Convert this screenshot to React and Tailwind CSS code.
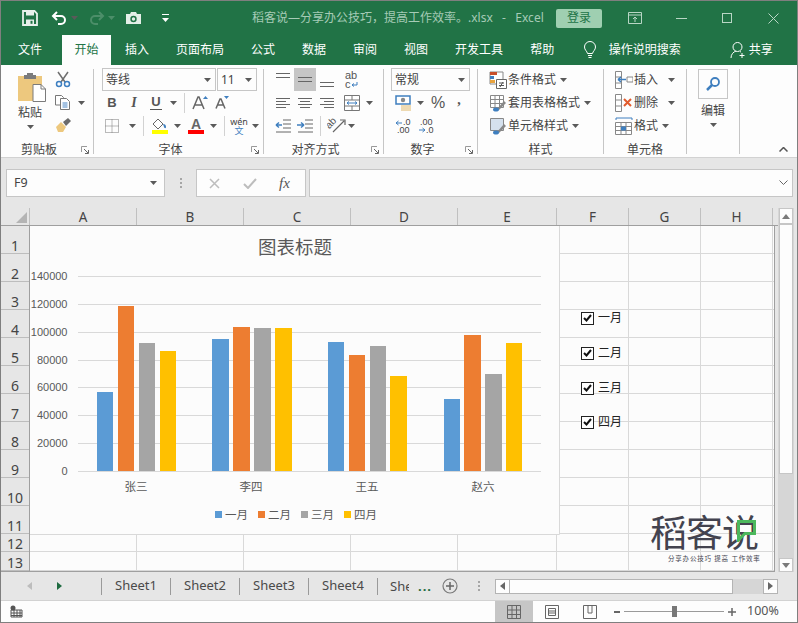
import React from 'react';

const BARS = [
  [[97, 392, 16], [118, 306, 16], [139, 343, 16], [160, 351, 16]],
  [[212, 339, 17], [233, 327, 17], [254, 328, 17], [275, 328, 17]],
  [[328, 342, 16], [349, 355, 16], [370, 346, 16], [390, 376, 17]],
  [[444, 399, 16], [464, 335, 17], [485, 374, 17], [506, 343, 16]],
];
const COLORS = ['#5b9bd5', '#ed7d31', '#a5a5a5', '#ffc000'];
const AXIS = [[276, '140000'], [304, '120000'], [332, '100000'], [360, '80000'], [387, '60000'], [415, '40000'], [443, '20000'], [471, '0']];
const ROW_H = ['h-[28px]', 'h-[28px]', 'h-[28px]', 'h-[28px]', 'h-[28px]', 'h-[28px]', 'h-[28px]', 'h-[28px]', 'h-[28px]', 'h-[28px]', 'h-[28px]', 'h-[18px]', 'h-[19px]'];

const Caret = ({ className = '' }) => (
  <svg width="7" height="4" viewBox="0 0 7 4" className={'shrink-0 ' + className}><path d="M0 0h7L3.5 4z" fill="#5a5a5a" /></svg>
);

const Vsep = ({ className = '' }) => <div className={'w-px h-[20px] bg-[#d2d2d2] shrink-0 ' + className} />;

const Launcher = () => (
  <svg width="8" height="8" viewBox="0 0 8 8" className="absolute right-[4px] bottom-[3px]">
    <path d="M.5 6V.5H6" stroke="#9a9a9a" fill="none" />
    <path d="M3 3l4 4M7.5 4v3.5H4" stroke="#666" fill="none" />
  </svg>
);

const Group = ({ width, label, launcher, children }) => (
  <>
    <div className={'relative flex flex-col shrink-0 ' + width}>
      <div className="flex-1 pt-[3px]">{children}</div>
      <div className={'h-[19px] pt-[2px] text-[12px] leading-[19px] text-center text-[#444] ' + (launcher ? 'pr-[16px]' : '')}>{label}</div>
      {launcher && <Launcher />}
    </div>
    <div className="w-px h-[85px] mt-[4px] bg-[#c6c6c6] shrink-0" />
  </>
);

const Lines = ({ rows }) => (
  <svg width="16" height="14" viewBox="0 0 16 14">
    {rows.map((r, i) => <rect key={i} x={r[0]} y={r[1]} width={r[2]} height="1" fill="#666" />)}
  </svg>
);

const Row = ({ className = '', children }) => <div className={'flex items-center h-[23px] ' + className}>{children}</div>;

const StyleRow = ({ icon, label }) => (
  <div className="flex items-center h-[23px] pl-[11px] text-[12px] text-[#444]">
    <span className="w-[18px] flex shrink-0">{icon}</span>
    <span className="ml-px pt-px">{label}</span>
    <Caret className="ml-[4px]" />
  </div>
);

const CellRow = ({ icon, label, caret }) => (
  <div className="flex items-center h-[23px] pl-[11px] text-[12px] text-[#444]">
    <span className="w-[19px] flex shrink-0">{icon}</span>
    <span className="pt-px">{label}</span>
    <Caret className={caret} />
  </div>
);

const TableIcon = ({ children }) => (
  <svg width="18" height="18" viewBox="0 0 18 18">
    <path d="M1.5 1.5h13v12h-13zM1.5 5.5h13M1.5 9.5h13M6 1.5v12M10.5 1.5v12" stroke="#888" fill="#fff" />
    {children}
  </svg>
);

const Tab = ({ label, active, className = '' }) => (
  <div className={'h-[30px] flex items-center justify-center px-[13.5px] shrink-0 whitespace-nowrap ' + (active ? 'bg-[#fdfdfd] text-[#217346] ' : 'text-white ') + className}>{label}</div>
);

const SheetTab = ({ label }) => (
  <div className="w-[69px] h-[17px] border-l border-[#9a9a9a] flex items-center justify-center text-[13px] text-[#4a4a4a] shrink-0">{label}</div>
);

const CheckItem = ({ top, label }) => (
  <div className={'absolute left-[580px] flex items-center gap-[4px] text-[12px] leading-[14px] text-[#222] ' + top}>
    <div className="w-[13px] h-[13px] border border-[#222] bg-white flex items-center justify-center">
      <svg width="9" height="8" viewBox="0 0 9 8"><path d="M1 4l2.5 2.5L8 1" stroke="#111" strokeWidth="2" fill="none" /></svg>
    </div>
    <span>{label}</span>
  </div>
);

const Chart = () => (
  <svg viewBox="30 226 530 309" width="530" height="309" className="absolute left-[29px] top-0 bg-[#fcfcfc] font-['Liberation_Sans','Noto_Sans_CJK_SC',sans-serif]">
    <path d="M559.5 226v308.5H30" stroke="#d9d9d9" fill="none" />
    <text x="295" y="254" textAnchor="middle" fontSize="18.5" fill="#595959" fontFamily="'Noto Sans CJK SC'">图表标题</text>
    {AXIS.map(([y, t]) => (
      <g key={t}>
        <rect x="78" y={y} width="463" height="1" fill="#d9d9d9" />
        <text x="67.5" y={y + 3.5} textAnchor="end" fontSize="11" fill="#595959">{t}</text>
      </g>
    ))}
    {BARS.map((g, i) => g.map(([x, y, w], j) => <rect key={i + '-' + j} x={x} y={y} width={w} height={471 - y} fill={COLORS[j]} />))}
    {[['张三', 136], ['李四', 251], ['王五', 367], ['赵六', 483]].map(([t, x]) => (
      <text key={t} x={x} y="491" textAnchor="middle" fontSize="11.5" fill="#595959" fontFamily="'Noto Sans CJK SC'">{t}</text>
    ))}
    {[['一月', 215], ['二月', 258], ['三月', 301], ['四月', 344]].map(([t, x], i) => (
      <g key={t}>
        <rect x={x} y="511" width="7" height="7" fill={COLORS[i]} />
        <text x={x + 10} y="519" fontSize="11.5" fill="#595959" fontFamily="'Noto Sans CJK SC'">{t}</text>
      </g>
    ))}
  </svg>
);

export default function App() {
  const colHead = [['A', 'w-[107px]'], ['B', 'w-[107px]'], ['C', 'w-[107px]'], ['D', 'w-[107px]'], ['E', 'w-[99px]'], ['F', 'w-[72px]'], ['G', 'w-[72px]'], ['H', 'w-[72px]']];
  const cols = ['w-[107px]', 'w-[107px]', 'w-[107px]', 'w-[107px]', 'w-[99px]', 'w-[72px]', 'w-[72px]', 'w-[72px]', 'w-[3px]'];
  return (
    <div className="w-[798px] h-[623px] overflow-hidden border border-[#7f7f7f] bg-[#e6e6e6] flex flex-col font-['Noto_Sans','Noto_Sans_CJK_SC',sans-serif]">
      {/* title bar */}
      <div className="h-[34px] bg-[#217346] flex items-center pl-[21px] shrink-0">
        <svg width="16" height="16" viewBox="0 0 16 16">
          <path d="M1 1h11.5L15 3.5V15H1z" stroke="#e8f0eb" strokeWidth="1.8" fill="none" />
          <path d="M4 1h8v4.5H4zM4 9.5h8V15H4z" fill="#e8f0eb" />
          <rect x="8.5" y="10.8" width="2" height="3" fill="#217346" />
        </svg>
        <svg width="17" height="16" viewBox="0 0 17 16" className="ml-[13px]">
          <path d="M6 2L2 6l4 4M2.5 6H10a4 4 0 0 1 0 8H7" stroke="#fff" strokeWidth="2" fill="none" />
        </svg>
        <Caret className="ml-[3px]" />
        <svg width="17" height="16" viewBox="0 0 17 16" className="ml-[10px]">
          <path d="M11 2l4 4-4 4M14.5 6H7a4 4 0 0 0 0 8h3" stroke="#4c8e69" strokeWidth="2" fill="none" />
        </svg>
        <svg width="7" height="4" viewBox="0 0 7 4" className="ml-[3px]"><path d="M0 0h7L3.5 4z" fill="#4c8e69" /></svg>
        <svg width="17" height="14" viewBox="0 0 17 14" className="ml-[10px]">
          <path d="M1 3h4l1-2h5l1 2h4v10H1z" fill="#e4efe8" />
          <circle cx="8.5" cy="8" r="3.2" fill="#217346" />
          <circle cx="8.5" cy="8" r="1.7" fill="#e4efe8" />
        </svg>
        <svg width="7" height="8" viewBox="0 0 7 8" className="ml-[20px]">
          <path d="M0 0h7v1H0z" fill="#fff" /><path d="M0 4h7L3.5 8z" fill="#fff" />
        </svg>
        <div className="ml-[83px] w-[296px] text-[12px] text-[#a6cbb6] whitespace-nowrap [text-spacing-trim:space-all] [font-feature-settings:'palt'_0]">稻客说—分享办公技巧，提高工作效率。.xlsx&nbsp;&nbsp;&nbsp;-&nbsp;&nbsp;&nbsp;Excel</div>
        <div className="ml-[8px] w-[46px] h-[19px] rounded-[2px] bg-[#9fcfb1] text-[#217346] text-[12px] flex items-center justify-center">登录</div>
        <svg width="14" height="12" viewBox="0 0 14 12" className="ml-[26px]">
          <path d="M.5.5h13v11H.5zM.5 3h13M7 10V5M5 7l2-2 2 2" stroke="#b9d6c5" fill="none" />
        </svg>
        <div className="ml-[34px] w-[11px] h-px bg-[#b9d6c5]" />
        <div className="ml-[35px] w-[10px] h-[10px] border border-[#b9d6c5]" />
        <svg width="11" height="11" viewBox="0 0 11 11" className="ml-[36px]"><path d="M.5.5l10 10M10.5.5l-10 10" stroke="#b9d6c5" /></svg>
      </div>
      {/* tabs */}
      <div className="h-[30px] bg-[#217346] flex items-center pl-[3.5px] text-[12px] shrink-0">
        <Tab label="文件" />
        <Tab label="开始" active className="ml-[6.5px] w-[49px] px-0" />
        <Tab label="插入" className="ml-[0.5px]" />
        <Tab label="页面布局" />
        <Tab label="公式" />
        <Tab label="数据" />
        <Tab label="审阅" />
        <Tab label="视图" />
        <Tab label="开发工具" />
        <Tab label="帮助" />
        <svg width="14" height="18" viewBox="0 0 14 18" className="ml-[15px]">
          <path d="M4.5 12.5C4 10 1.5 9 1.5 6a5.5 5.5 0 0 1 11 0c0 3-2.5 4-3 6.5zM5 14.5h4M5.5 16.5h3" stroke="#fff" fill="none" />
        </svg>
        <div className="ml-[12px] text-white whitespace-nowrap">操作说明搜索</div>
        <svg width="16" height="18" viewBox="0 0 16 18" className="ml-[49px]">
          <circle cx="7.5" cy="6" r="4.5" stroke="#fff" fill="none" />
          <path d="M1 17c0-4 2.5-6 5-7M12 12v5M9.5 14.5h5M10 10.5l1 .6" stroke="#fff" fill="none" />
        </svg>
        <div className="ml-[3px] text-white">共享</div>
      </div>
      {/* ribbon */}
      <div className="h-[93px] bg-[#fdfdfd] border-b border-[#d2d2d2] flex shrink-0 text-[#444] relative">
        <Group width="w-[92px]" label="剪贴板" launcher>
          <div className="flex">
            <div className="w-[49px] pl-[17px] flex flex-col">
              <svg width="28" height="29" viewBox="0 0 28 29" className="mt-[5px]">
                <path d="M0 3h24v25H0z" fill="#edc87e" />
                <path d="M6 2h3V0h6v2h3v4H6z" fill="#7b7b7b" />
                <path d="M15 11.5h8l4.5 4.5v12.5H15z" fill="#fff" stroke="#7b7b7b" />
                <path d="M23 11.5V16h4.500" fill="none" stroke="#7b7b7b" />
              </svg>
              <span className="text-[12px] leading-[14px] mt-[4px] whitespace-nowrap">粘贴</span>
              <Caret className="ml-[9px] mt-[5px]" />
            </div>
            <div className="flex flex-col pl-[5px]">
              <div className="h-[23px] flex items-center">
                <svg width="16" height="17" viewBox="0 0 16 17">
                  <path d="M3 1l7 10M13 1L6 11" stroke="#6f6f6f" strokeWidth="1.5" />
                  <circle cx="4" cy="13" r="2.5" stroke="#3e7fc1" strokeWidth="1.5" fill="none" />
                  <circle cx="12" cy="13" r="2.5" stroke="#3e7fc1" strokeWidth="1.5" fill="none" />
                </svg>
              </div>
              <div className="h-[23px] flex items-center">
                <svg width="16" height="15" viewBox="0 0 16 15">
                  <path d="M.5.5h6l2 2V10H.5z" fill="#fff" stroke="#777" />
                  <path d="M5.5 3.5h6l3 3v8h-9z" fill="#fff" stroke="#777" />
                  <path d="M7.5 8h5M7.5 10h5M7.5 12h5" stroke="#4a86c6" />
                </svg>
                <Caret className="ml-[7px]" />
              </div>
              <div className="h-[23px] flex items-center">
                <svg width="16" height="15" viewBox="0 0 16 15">
                  <path d="M1 9l5-5 5 5-3 5H3z" fill="#edc87e" />
                  <path d="M8 4l5-4 3 3-5 5z" fill="#6b6b6b" />
                </svg>
              </div>
            </div>
          </div>
        </Group>

        <Group width="w-[169px]" label="字体" launcher>
          <Row className="pl-[8px]">
            <div className="w-[114px] h-[23px] border border-[#c6c6c6] flex items-center justify-between pl-[3px] pr-[4px] text-[12px]">等线<Caret /></div>
            <div className="w-[40px] h-[23px] ml-px border border-[#c6c6c6] flex items-center justify-between pl-[3px] pr-[4px] text-[12px]">11<Caret /></div>
          </Row>
          <Row className="pl-[8px] font-['Liberation_Serif',serif]">
            <span className="w-[20px] text-center font-['Liberation_Sans',sans-serif] font-bold text-[13px] text-[#555]">B</span>
            <span className="w-[24px] text-center italic font-bold text-[14px] text-[#555]">I</span>
            <span className="w-[20px] flex justify-center">
              <span className="font-['Liberation_Sans',sans-serif] font-bold text-[13px] leading-[14px] border-b border-[#555] text-[#555] h-[15px] px-px">U</span>
            </span>
            <Caret className="ml-[4px]" />
            <Vsep className="ml-[7px]" />
            <svg width="17" height="15" viewBox="0 0 17 15" className="ml-[7px]"><path d="M1 14L6 2h1l5 12M3 10h7" stroke="#666" strokeWidth="1.5" fill="none" /><path d="M11 4l2.5-3L16 4z" fill="#3f7fbf" /></svg>
            <svg width="15" height="13" viewBox="0 0 15 13" className="ml-[6px]"><path d="M1 12.5L5 3h1l4 9.5M2.5 9h6" stroke="#666" strokeWidth="1.5" fill="none" /><path d="M9 0h5l-2.5 3z" fill="#3f7fbf" /></svg>
          </Row>
          <Row className="pl-[11px]">
            <svg width="14" height="14" viewBox="0 0 14 14"><path d="M.5.5h13v13H.5zM7 .5v13M.5 7h13" stroke="#777" strokeDasharray="1 1" fill="none" /></svg>
            <Caret className="ml-[10px]" />
            <Vsep className="ml-[7px]" />
            <div className="ml-[7px] flex flex-col items-center">
              <svg width="17" height="12" viewBox="0 0 17 12"><path d="M7 1l5 5-5 5-5-5z" fill="#fff" stroke="#666" /><path d="M12 6c2 0 3 1 3 3s-2 1-2 0z" fill="#3f7fbf" /></svg>
              <div className="w-[16px] h-[4px] bg-[#ffff00]" />
            </div>
            <Caret className="ml-[6px]" />
            <div className="ml-[7px] flex flex-col items-center w-[16px]">
              <span className="font-['Liberation_Sans',sans-serif] text-[14px] leading-[12px] font-bold text-[#666]">A</span>
              <div className="w-[16px] h-[4px] bg-[#ff0000]" />
            </div>
            <Caret className="ml-[6px]" />
            <Vsep className="ml-[7px]" />
            <div className="ml-[6px] w-[16px] flex flex-col items-center text-[9px] leading-[9px]">
              <span>wén</span><span className="text-[#3f7fbf]">文</span>
            </div>
            <Caret className="ml-[5px]" />
          </Row>
        </Group>

        <Group width="w-[119px]" label="对齐方式" launcher>
          <Row className="pl-[8px]">
            <div className="w-[22px] flex justify-center"><Lines rows={[[1, 0, 14], [1, 4, 14]]} /></div>
            <div className="w-[22px] h-[23px] bg-[#c6c6c6] flex items-center justify-center"><Lines rows={[[1, 4, 14], [1, 8, 14]]} /></div>
            <div className="w-[22px] flex justify-center"><Lines rows={[[1, 9, 14], [1, 13, 14]]} /></div>
            <svg width="16" height="20" viewBox="0 0 16 20" className="ml-[6px] font-['Liberation_Sans',sans-serif]">
              <text x="1" y="9" fontSize="11" fill="#555">ab</text>
              <text x="1" y="18" fontSize="11" fill="#555">c</text>
              <path d="M13 12v3H8M8 15l2-1.5M8 15l2 1.5" stroke="#3f7fbf" fill="none" />
            </svg>
          </Row>
          <Row className="pl-[8px]">
            <div className="w-[22px] flex justify-center"><Lines rows={[[1, 2, 14], [1, 5, 10], [1, 8, 14], [1, 11, 10]]} /></div>
            <div className="w-[22px] flex justify-center"><Lines rows={[[1, 2, 14], [3, 5, 10], [1, 8, 14], [3, 11, 10]]} /></div>
            <div className="w-[22px] flex justify-center"><Lines rows={[[1, 2, 14], [5, 5, 10], [1, 8, 14], [5, 11, 10]]} /></div>
            <div className="ml-[3px] w-[22px] flex justify-center">
              <svg width="16" height="16" viewBox="0 0 16 16"><path d="M.5.5h15v15H.5zM.5 5h15M.5 11h15M8 .5V5M8 11v4.5" stroke="#777" fill="#fff" /><path d="M3 8h10M3 8l2-1.5M3 8l2 1.5M13 8l-2-1.5M13 8l-2 1.5" stroke="#3f7fbf" fill="none" /></svg>
            </div>
            <Caret className="ml-[3px]" />
          </Row>
          <Row className="pl-[8px]">
            <div className="w-[22px] flex justify-center">
              <svg width="16" height="14" viewBox="0 0 16 14"><path d="M8 1h8M8 5h8M8 9h8M1 13h15" stroke="#666" fill="none" /><path d="M1 6h6M1 6l3-2.5M1 6l3 2.5" stroke="#3f7fbf" strokeWidth="1.5" fill="none" /></svg>
            </div>
            <div className="w-[22px] flex justify-center">
              <svg width="16" height="14" viewBox="0 0 16 14"><path d="M8 1h8M8 5h8M8 9h8M1 13h15" stroke="#666" fill="none" /><path d="M0 6h6M7 6L4 3.5M7 6L4 8.5" stroke="#3f7fbf" strokeWidth="1.5" fill="none" /></svg>
            </div>
            <Vsep className="ml-[4px]" />
            <svg width="20" height="17" viewBox="0 0 20 17" className="ml-[6px] font-['Liberation_Sans',sans-serif]">
              <text x="0" y="9" fontSize="10" fill="#555" transform="rotate(-45 5 8)">ab</text>
              <path d="M6 15L17 4M13 3h5v5" stroke="#666" strokeWidth="1.2" fill="none" />
            </svg>
            <Caret className="ml-px" />
          </Row>
        </Group>

        <Group width="w-[93px]" label="数字" launcher>
          <Row className="pl-[7px]">
            <div className="w-[79px] h-[23px] border border-[#c6c6c6] flex items-center justify-between pl-[3px] pr-[4px] text-[12px]">常规<Caret /></div>
          </Row>
          <Row className="pl-[11px]">
            <svg width="17" height="16" viewBox="0 0 17 16">
              <path d="M1 1h14v8H1z" fill="#fff" stroke="#3f7fbf" strokeWidth="1.5" />
              <circle cx="8" cy="5" r="2.2" fill="#888" />
              <path d="M6 11h10M6 13h10M6 15h10" stroke="#e0b868" />
            </svg>
            <Caret className="ml-[5px]" />
            <span className="ml-[7px] text-[16px] font-['Liberation_Sans',sans-serif] text-[#555]">%</span>
            <span className="ml-[12px] mb-[6px] text-[14px] font-bold font-['Liberation_Serif',serif] leading-[10px] text-[#555]">,</span>
          </Row>
          <Row className="pl-[11px] font-['Liberation_Sans',sans-serif]">
            <svg width="16" height="16" viewBox="0 0 16 16"><path d="M1 5h6M1 5l2.5-2M1 5l2.5 2" stroke="#3f7fbf" fill="none" /><text x="8" y="7" fontSize="9" fill="#444">.0</text><text x="2" y="15" fontSize="9" fill="#444">.00</text></svg>
            <svg width="16" height="16" viewBox="0 0 16 16" className="ml-[7px]"><text x="2" y="7" fontSize="9" fill="#444">.00</text><path d="M1 12h6M7 12l-2.5-2M7 12l-2.5 2" stroke="#3f7fbf" fill="none" /><text x="8" y="15" fontSize="9" fill="#444">.0</text></svg>
          </Row>
        </Group>

        <Group width="w-[125px]" label="样式">
          <StyleRow label="条件格式" icon={
            <svg width="18" height="18" viewBox="0 0 18 18">
              <path d="M1 1h13v12H1z" fill="#fff" stroke="#888" />
              <path d="M1 1h7v3H1z" fill="#c9502b" /><path d="M1 5h4v3H1z" fill="#3f7fbf" /><path d="M1 9h5v3H1z" fill="#e9a33d" />
              <path d="M7.5 8.5h10v9h-10z" fill="#fff" stroke="#666" />
              <path d="M10 12h5M10 14.5h5M14 11l-3 5" stroke="#555" fill="none" />
            </svg>} />
          <StyleRow label="套用表格格式" icon={
            <TableIcon><path d="M8 15l7-8 2 2-7 7z" fill="#888" /><ellipse cx="7" cy="15.5" rx="3" ry="2" fill="#3f7fbf" /></TableIcon>} />
          <StyleRow label="单元格样式" icon={
            <svg width="18" height="18" viewBox="0 0 18 18">
              <path d="M1.5 1.5h13v12h-13z" fill="#d5e1ee" stroke="#888" />
              <path d="M8 15l7-8 2 2-7 7z" fill="#888" /><ellipse cx="7" cy="15.5" rx="3" ry="2" fill="#3f7fbf" />
            </svg>} />
        </Group>

        <Group width="w-[82px]" label="单元格">
          <CellRow label="插入" caret="ml-[10px]" icon={
            <svg width="18" height="18" viewBox="0 0 18 18">
              <path d="M.5.5h6v17h-6zM.5 6h6M.5 12h6M12 6h6v5h-6z" stroke="#888" fill="#fff" />
              <path d="M3 8.5h8M3 8.5L6 6M3 8.5L6 11" stroke="#3f7fbf" strokeWidth="1.5" fill="none" />
            </svg>} />
          <CellRow label="删除" caret="ml-[10px]" icon={
            <svg width="18" height="18" viewBox="0 0 18 18">
              <path d="M.5.5h6v17h-6zM.5 6h6M.5 12h6" stroke="#888" fill="#fff" />
              <path d="M9 5l7 7M16 5l-7 7" stroke="#e25b2c" strokeWidth="2" />
            </svg>} />
          <CellRow label="格式" caret="ml-[4px]" icon={
            <svg width="18" height="18" viewBox="0 0 18 18">
              <path d="M1 1h16M1 1v2M17 1v2" stroke="#3f7fbf" />
              <path d="M.5 5.5h16v12H.5zM.5 9.5h16M.5 13.5h16M6 5.5v12M11 5.5v12" stroke="#888" fill="#fff" />
              <rect x="6" y="9.5" width="5" height="4" fill="#3f7fbf" />
            </svg>} />
        </Group>

        <div className="w-[52px] flex flex-col items-center shrink-0">
          <div className="mt-[4px] w-[30px] h-[30px] border border-[#c6c6c6] flex items-center justify-center">
            <svg width="16" height="16" viewBox="0 0 16 16"><circle cx="10" cy="6" r="4" stroke="#3f7fbf" strokeWidth="1.8" fill="none" /><path d="M7 9l-5 5" stroke="#3f7fbf" strokeWidth="2.5" /></svg>
          </div>
          <span className="mt-[5px] text-[12px] leading-[14px]">编辑</span>
          <Caret className="mt-[5px]" />
        </div>
        <div className="w-px h-[85px] mt-[4px] bg-[#c6c6c6] shrink-0" />
        <svg width="9" height="5" viewBox="0 0 9 5" className="absolute left-[778px] top-[82px]"><path d="M.5 4.5l4-4 4 4" stroke="#555" strokeWidth="1.5" fill="none" /></svg>
      </div>

      {/* formula bar */}
      <div className="h-[50px] pt-[11px] pl-[5px] flex shrink-0 items-start">
        <div className="w-[159px] h-[28px] bg-[#fdfdfd] border border-[#c6c6c6] flex items-center justify-between pl-[7px] pr-[7px] text-[12.5px] text-[#444]">F9<Caret /></div>
        <div className="w-[31px] h-[28px] flex flex-col items-center justify-center gap-[2px]">
          <div className="w-[2px] h-[2px] bg-[#a6a6a6]" /><div className="w-[2px] h-[2px] bg-[#a6a6a6]" /><div className="w-[2px] h-[2px] bg-[#a6a6a6]" />
        </div>
        <div className="w-[110px] h-[28px] bg-[#fdfdfd] border border-[#c6c6c6] flex items-center pl-[12px]">
          <svg width="11" height="11" viewBox="0 0 11 11"><path d="M1 1l9 9M10 1l-9 9" stroke="#bdbdbd" strokeWidth="1.5" /></svg>
          <svg width="14" height="11" viewBox="0 0 14 11" className="ml-[23px]"><path d="M1 6l4 4 8-9" stroke="#bdbdbd" strokeWidth="2" fill="none" /></svg>
          <span className="ml-[22px] text-[15px] italic font-['Liberation_Serif',serif] text-[#555]">fx</span>
        </div>
        <div className="w-[484px] h-[28px] ml-[3px] bg-[#fdfdfd] border border-[#c6c6c6] flex items-center justify-end pr-[4px]">
          <svg width="9" height="6" viewBox="0 0 9 6"><path d="M.5.5l4 4 4-4" stroke="#666" fill="none" /></svg>
        </div>
      </div>

      {/* sheet area */}
      <div className="h-[364px] flex shrink-0">
        <div className="w-[777px] shrink-0 flex flex-col">
          <div className="h-[18px] flex border-b border-[#9f9f9f] shrink-0">
            <div className="w-[29px] h-[17px] relative shrink-0 border-r border-[#c0c0c0]">
              <svg width="11" height="11" viewBox="0 0 11 11" className="absolute right-[2px] bottom-[2px]"><path d="M11 0v11H0z" fill="#b4b4b4" /></svg>
            </div>
            {colHead.map(([c, w]) => (
              <div key={c} className={'h-[17px] flex items-end justify-center border-r border-[#c0c0c0] text-[13.5px] leading-[16px] text-[#444] shrink-0 ' + w}>{c}</div>
            ))}
          </div>
          <div className="relative flex h-[346px] w-[774px] bg-[#fcfcfc] border-r border-b border-[#9f9f9f] overflow-hidden">
            <div className="w-[29px] shrink-0 border-r border-[#9f9f9f] bg-[#e6e6e6]">
              {ROW_H.map((h, i) => (
                <div key={i} className={'flex items-end justify-center border-b border-[#bdbdbd] text-[14px] leading-[15px] text-[#444] ' + h}>{i + 1}</div>
              ))}
            </div>
            <div className="flex-1">
              {ROW_H.map((h, i) => (
                <div key={i} className={'flex border-b border-[#d9d9d9] ' + h}>
                  {cols.map((w, j) => <div key={j} className={'border-r border-[#d9d9d9] shrink-0 ' + w} />)}
                </div>
              ))}
            </div>
            <Chart />
            <CheckItem top="top-[85px]" label="一月" />
            <CheckItem top="top-[120px]" label="二月" />
            <CheckItem top="top-[155px]" label="三月" />
            <CheckItem top="top-[189px]" label="四月" />
            {/* watermark */}
            <div className="absolute left-[649px] top-[283px] w-[112px] h-[60px]">
              <div className="text-[37px] leading-[44px] tracking-[-1px] text-[#43434f] whitespace-nowrap font-['Noto_Sans_CJK_SC',sans-serif]">稻客说</div>
              <div className="absolute left-[18px] top-[46px] text-[6.5px] leading-[8px] tracking-[0.8px] text-[#43434f] whitespace-nowrap">分享办公技巧 提高 工作效率</div>
              <svg width="19" height="22" viewBox="0 0 19 22" className="absolute left-[87px] top-[11px]"><path d="M1.5 1.5h16v12H8L1.5 20z" fill="none" stroke="#4cb85c" strokeWidth="3" /></svg>
            </div>
          </div>
        </div>
        {/* vertical scrollbar */}
        <div className="w-[16px] h-[364px] px-px bg-[#d6d6d6] flex flex-col shrink-0">
          <div className="h-[16px] bg-[#fdfdfd] border border-[#c6c6c6] flex items-center justify-center"><svg width="8" height="5" viewBox="0 0 8 5"><path d="M0 5h8L4 0z" fill="#7a7a7a" /></svg></div>
          <div className="h-[250px] bg-[#fdfdfd] border border-[#c6c6c6]" />
          <div className="flex-1" />
          <div className="h-[14px] bg-[#fdfdfd] border border-[#c6c6c6] flex items-center justify-center"><svg width="8" height="5" viewBox="0 0 8 5"><path d="M0 0h8L4 5z" fill="#7a7a7a" /></svg></div>
        </div>
      </div>

      {/* sheet tabs */}
      <div className="h-[29px] flex items-center shrink-0 border-b border-[#d2d2d2]">
        <svg width="5" height="8" viewBox="0 0 5 8" className="ml-[26px]"><path d="M5 0v8L0 4z" fill="#bdbdbd" /></svg>
        <svg width="5" height="8" viewBox="0 0 5 8" className="ml-[25px]"><path d="M0 0v8l5-4z" fill="#1e6b40" /></svg>
        <div className="ml-[39px] flex">
          <SheetTab label="Sheet1" />
          <SheetTab label="Sheet2" />
          <SheetTab label="Sheet3" />
          <SheetTab label="Sheet4" />
          <div className="w-[32px] h-[17px] border-l border-[#9a9a9a] pl-[12px] overflow-hidden text-[13px] leading-[17px] text-[#4a4a4a] shrink-0">She</div>
        </div>
        <span className="ml-[9px] text-[13px] leading-[13px] font-bold text-[#1e6b40] tracking-[1px]">...</span>
        <svg width="16" height="16" viewBox="0 0 16 16" className="ml-[10px]"><circle cx="8" cy="8" r="7" stroke="#7a7a7a" strokeWidth="1.2" fill="none" /><path d="M8 4v8M4 8h8" stroke="#666" strokeWidth="1.5" /></svg>
        <div className="ml-[20px] flex flex-col gap-[2px]">
          <div className="w-[2px] h-[2px] bg-[#a6a6a6]" /><div className="w-[2px] h-[2px] bg-[#a6a6a6]" /><div className="w-[2px] h-[2px] bg-[#a6a6a6]" />
        </div>
        <div className="ml-[15px] w-[283px] h-[15px] flex bg-[#d6d6d6]">
          <div className="w-[15px] bg-[#fdfdfd] border border-[#b4b4b4] flex items-center justify-center"><svg width="5" height="8" viewBox="0 0 5 8"><path d="M5 0v8L0 4z" fill="#666" /></svg></div>
          <div className="w-[223px] bg-[#fdfdfd] border border-[#b4b4b4] border-l-0" />
          <div className="w-[30px]" />
          <div className="w-[15px] bg-[#fdfdfd] border border-[#b4b4b4] flex items-center justify-center"><svg width="5" height="8" viewBox="0 0 5 8"><path d="M0 0v8l5-4z" fill="#666" /></svg></div>
        </div>
      </div>

      {/* status bar */}
      <div className="flex-1 bg-[#fdfdfd] flex items-center text-[#555]">
        <svg width="13" height="13" viewBox="0 0 13 13" className="ml-[9px]"><circle cx="3" cy="3" r="2.5" fill="#555" /><path d="M1 5h11v7H1zM1 8h11M1 10.5h11M4 5v7M7 5v7M10 5v7" stroke="#555" fill="none" /></svg>
        <div className="ml-[472px] w-[38px] h-[21px] bg-[#c6c6c6] flex items-center justify-center">
          <svg width="14" height="14" viewBox="0 0 14 14"><path d="M.5.5h13v13H.5zM5 .5v13M9.5.5v13M.5 5h13M.5 9.5h13" stroke="#666" fill="none" /></svg>
        </div>
        <svg width="14" height="14" viewBox="0 0 14 14" className="ml-[12px]"><path d="M.5.5h13v13H.5zM3.5 3.5h7v7h-7zM3.5 6h7M3.5 8h7" stroke="#666" fill="none" /></svg>
        <svg width="14" height="14" viewBox="0 0 14 14" className="ml-[24px]"><path d="M.5.5h13v13H.5zM5 .5V8h4V.5" stroke="#666" fill="none" /></svg>
        <div className="ml-[17px] w-[6px] h-[2px] bg-[#666]" />
        <div className="ml-[4px] w-[100px] h-px bg-[#9a9a9a] relative">
          <div className="absolute left-[48px] top-[-5px] w-[5px] h-[11px] bg-[#777]" />
        </div>
        <svg width="8" height="8" viewBox="0 0 8 8" className="ml-[4px]"><path d="M4 0v8M0 4h8" stroke="#666" strokeWidth="1.5" /></svg>
        <span className="ml-[11px] text-[12.5px] text-[#555]">100%</span>
      </div>
    </div>
  );
}
